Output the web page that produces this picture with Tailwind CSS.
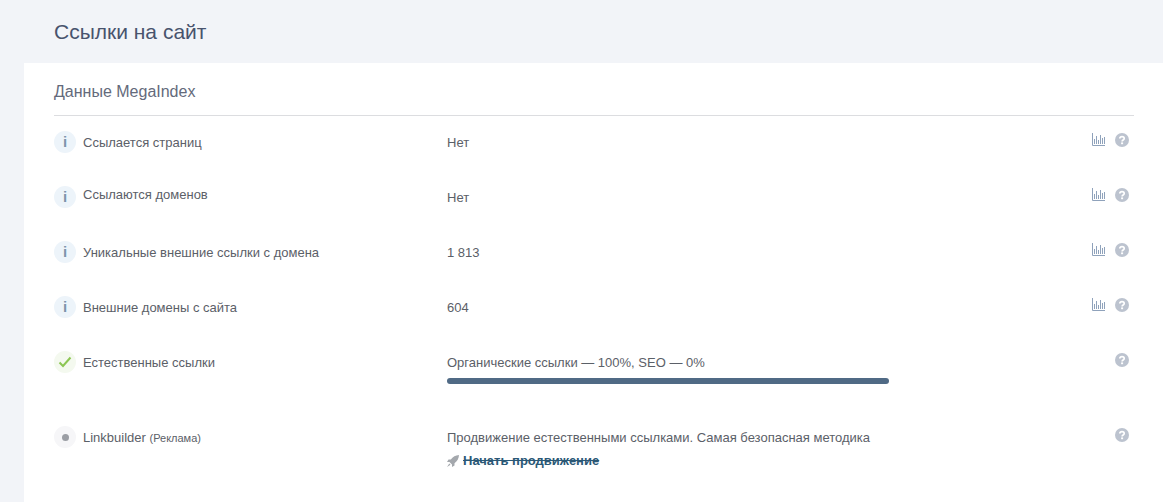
<!DOCTYPE html>
<html lang="ru">
<head>
  <meta charset="UTF-8">
  <title>Ссылки на сайт</title>
  <script src="https://cdn.jsdelivr.net/npm/@tailwindcss/browser@4"></script>
</head>
<body class="bg-[#f2f4f8] font-['Liberation_Sans',Arial,sans-serif] text-[13px] leading-[18px] text-[#5b6068] overflow-hidden">

  <svg class="hidden">
    <symbol id="bars" viewBox="0 0 13 13">
      <path d="M.5 0v12.5H13M2.500 6v5M4.500 3v8M6.500 7v4M8.500 2v9M10.500 5v6M12.500 4v7" fill="none" stroke="currentColor"/>
    </symbol>
    <symbol id="help" viewBox="0 0 14 14">
      <circle cx="7" cy="7" r="7" fill="currentColor"/>
      <path d="M4.800 5.500C4.900 4.200 5.800 3.600 7 3.600c1.300 0 2.200.7 2.200 1.800 0 1.700-2.100 1.500-2.100 3.100" fill="none" stroke="#fff" stroke-width="1.700"/>
      <rect x="6.100" y="9.400" width="2" height="1.800" fill="#fff"/>
    </symbol>
  </svg>

  <h1 class="h-[63px] pl-[54px] pt-[19px] text-[21px] leading-[26px] text-[#48536d]">Ссылки на сайт</h1>

  <main class="ml-6 h-[439px] bg-white pl-[30px] pr-[29px]">
    <h2 class="h-[53px] border-b border-[#dcdde0] pt-[19px] text-base leading-5 text-[#646a7b]">Данные MegaIndex</h2>

    <!-- строки -->
    <div class="flex h-[55px] pt-[15px]">
      <span class="flex h-[22px] w-[22px] items-center justify-center rounded-full bg-[#edf4fa] text-[15px] font-bold text-[#7d95ab]">i</span>
      <span class="ml-[7px] mt-[3px] w-[364px]">Ссылается страниц</span>
      <span class="mt-[3px] flex-1">Нет</span>
      <span class="mr-[5px] mt-[2px] flex h-[14px] items-center gap-[10px] text-[#8fa2bb]"><svg class="mt-[-1px] h-[13px] w-[13px]"><use href="#bars"/></svg><svg class="h-[14px] w-[14px] text-[#bcc3cf]"><use href="#help"/></svg></span>
    </div>
    <div class="flex h-[55px] pt-[15px]">
      <span class="flex h-[22px] w-[22px] items-center justify-center rounded-full bg-[#edf4fa] text-[15px] font-bold text-[#7d95ab]">i</span>
      <span class="ml-[7px] mt-0 w-[364px]">Ссылаются доменов</span>
      <span class="mt-[3px] flex-1">Нет</span>
      <span class="mr-[5px] mt-[2px] flex h-[14px] items-center gap-[10px] text-[#8fa2bb]"><svg class="mt-[-1px] h-[13px] w-[13px]"><use href="#bars"/></svg><svg class="h-[14px] w-[14px] text-[#bcc3cf]"><use href="#help"/></svg></span>
    </div>
    <div class="flex h-[55px] pt-[15px]">
      <span class="flex h-[22px] w-[22px] items-center justify-center rounded-full bg-[#edf4fa] text-[15px] font-bold text-[#7d95ab]">i</span>
      <span class="ml-[7px] mt-[3px] w-[364px]">Уникальные внешние ссылки с домена</span>
      <span class="mt-[3px] flex-1">1 813</span>
      <span class="mr-[5px] mt-[2px] flex h-[14px] items-center gap-[10px] text-[#8fa2bb]"><svg class="mt-[-1px] h-[13px] w-[13px]"><use href="#bars"/></svg><svg class="h-[14px] w-[14px] text-[#bcc3cf]"><use href="#help"/></svg></span>
    </div>
    <div class="flex h-[55px] pt-[15px]">
      <span class="flex h-[22px] w-[22px] items-center justify-center rounded-full bg-[#edf4fa] text-[15px] font-bold text-[#7d95ab]">i</span>
      <span class="ml-[7px] mt-[3px] w-[364px]">Внешние домены с сайта</span>
      <span class="mt-[3px] flex-1">604</span>
      <span class="mr-[5px] mt-[2px] flex h-[14px] items-center gap-[10px] text-[#8fa2bb]"><svg class="mt-[-1px] h-[13px] w-[13px]"><use href="#bars"/></svg><svg class="h-[14px] w-[14px] text-[#bcc3cf]"><use href="#help"/></svg></span>
    </div>
    <div class="flex h-[75px] pt-[15px]">
      <span class="flex h-[22px] w-[22px] items-center justify-center rounded-full bg-[#f4f9ef]">
        <svg class="h-3 w-[14px]" viewBox="0 0 14 12"><path d="M1.500 6.500 5 10 12.500 1.500" fill="none" stroke="#8cc653" stroke-width="2"/></svg>
      </span>
      <span class="ml-[7px] mt-[3px] w-[364px]">Естественные ссылки</span>
      <div class="mt-[3px] flex-1">
        <p>Органические ссылки — 100%, SEO — 0%</p>
        <div class="mt-[6px] h-[6px] w-[442px] rounded-full bg-[#506a85]"></div>
      </div>
      <svg class="mr-[5px] mt-[2px] h-[14px] w-[14px] text-[#bcc3cf]"><use href="#help"/></svg>
    </div>
    <div class="flex pt-[15px]">
      <span class="flex h-[22px] w-[22px] items-center justify-center rounded-full bg-[#f6f6f8]"><span class="h-[7px] w-[7px] rounded-full bg-[#9b9ea4]"></span></span>
      <span class="ml-[7px] mt-[3px] w-[364px]">Linkbuilder <span class="text-[11px]">(Реклама)</span></span>
      <div class="mt-[3px] flex-1">
        <p>Продвижение естественными ссылками. Самая безопасная методика</p>
        <a href="#" class="mt-[5px] flex items-center gap-1 font-bold text-[#2b5876] line-through">
          <svg class="h-3 w-3" viewBox="0 0 12 12"><path d="M12 0C8.500.2 5.800 1.700 3.800 4.500H1.500L0 7h2.500l2.500 2.500V12l2.500-1.500V8.200C10.300 6.200 11.800 3.500 12 0ZM2.300 8.500 0 12l3.500-2.300Z" fill="#a4a8ad"/></svg>
          Начать продвижение
        </a>
      </div>
      <svg class="mr-[5px] mt-[2px] h-[14px] w-[14px] text-[#bcc3cf]"><use href="#help"/></svg>
    </div>
  </main>

</body>
</html>
